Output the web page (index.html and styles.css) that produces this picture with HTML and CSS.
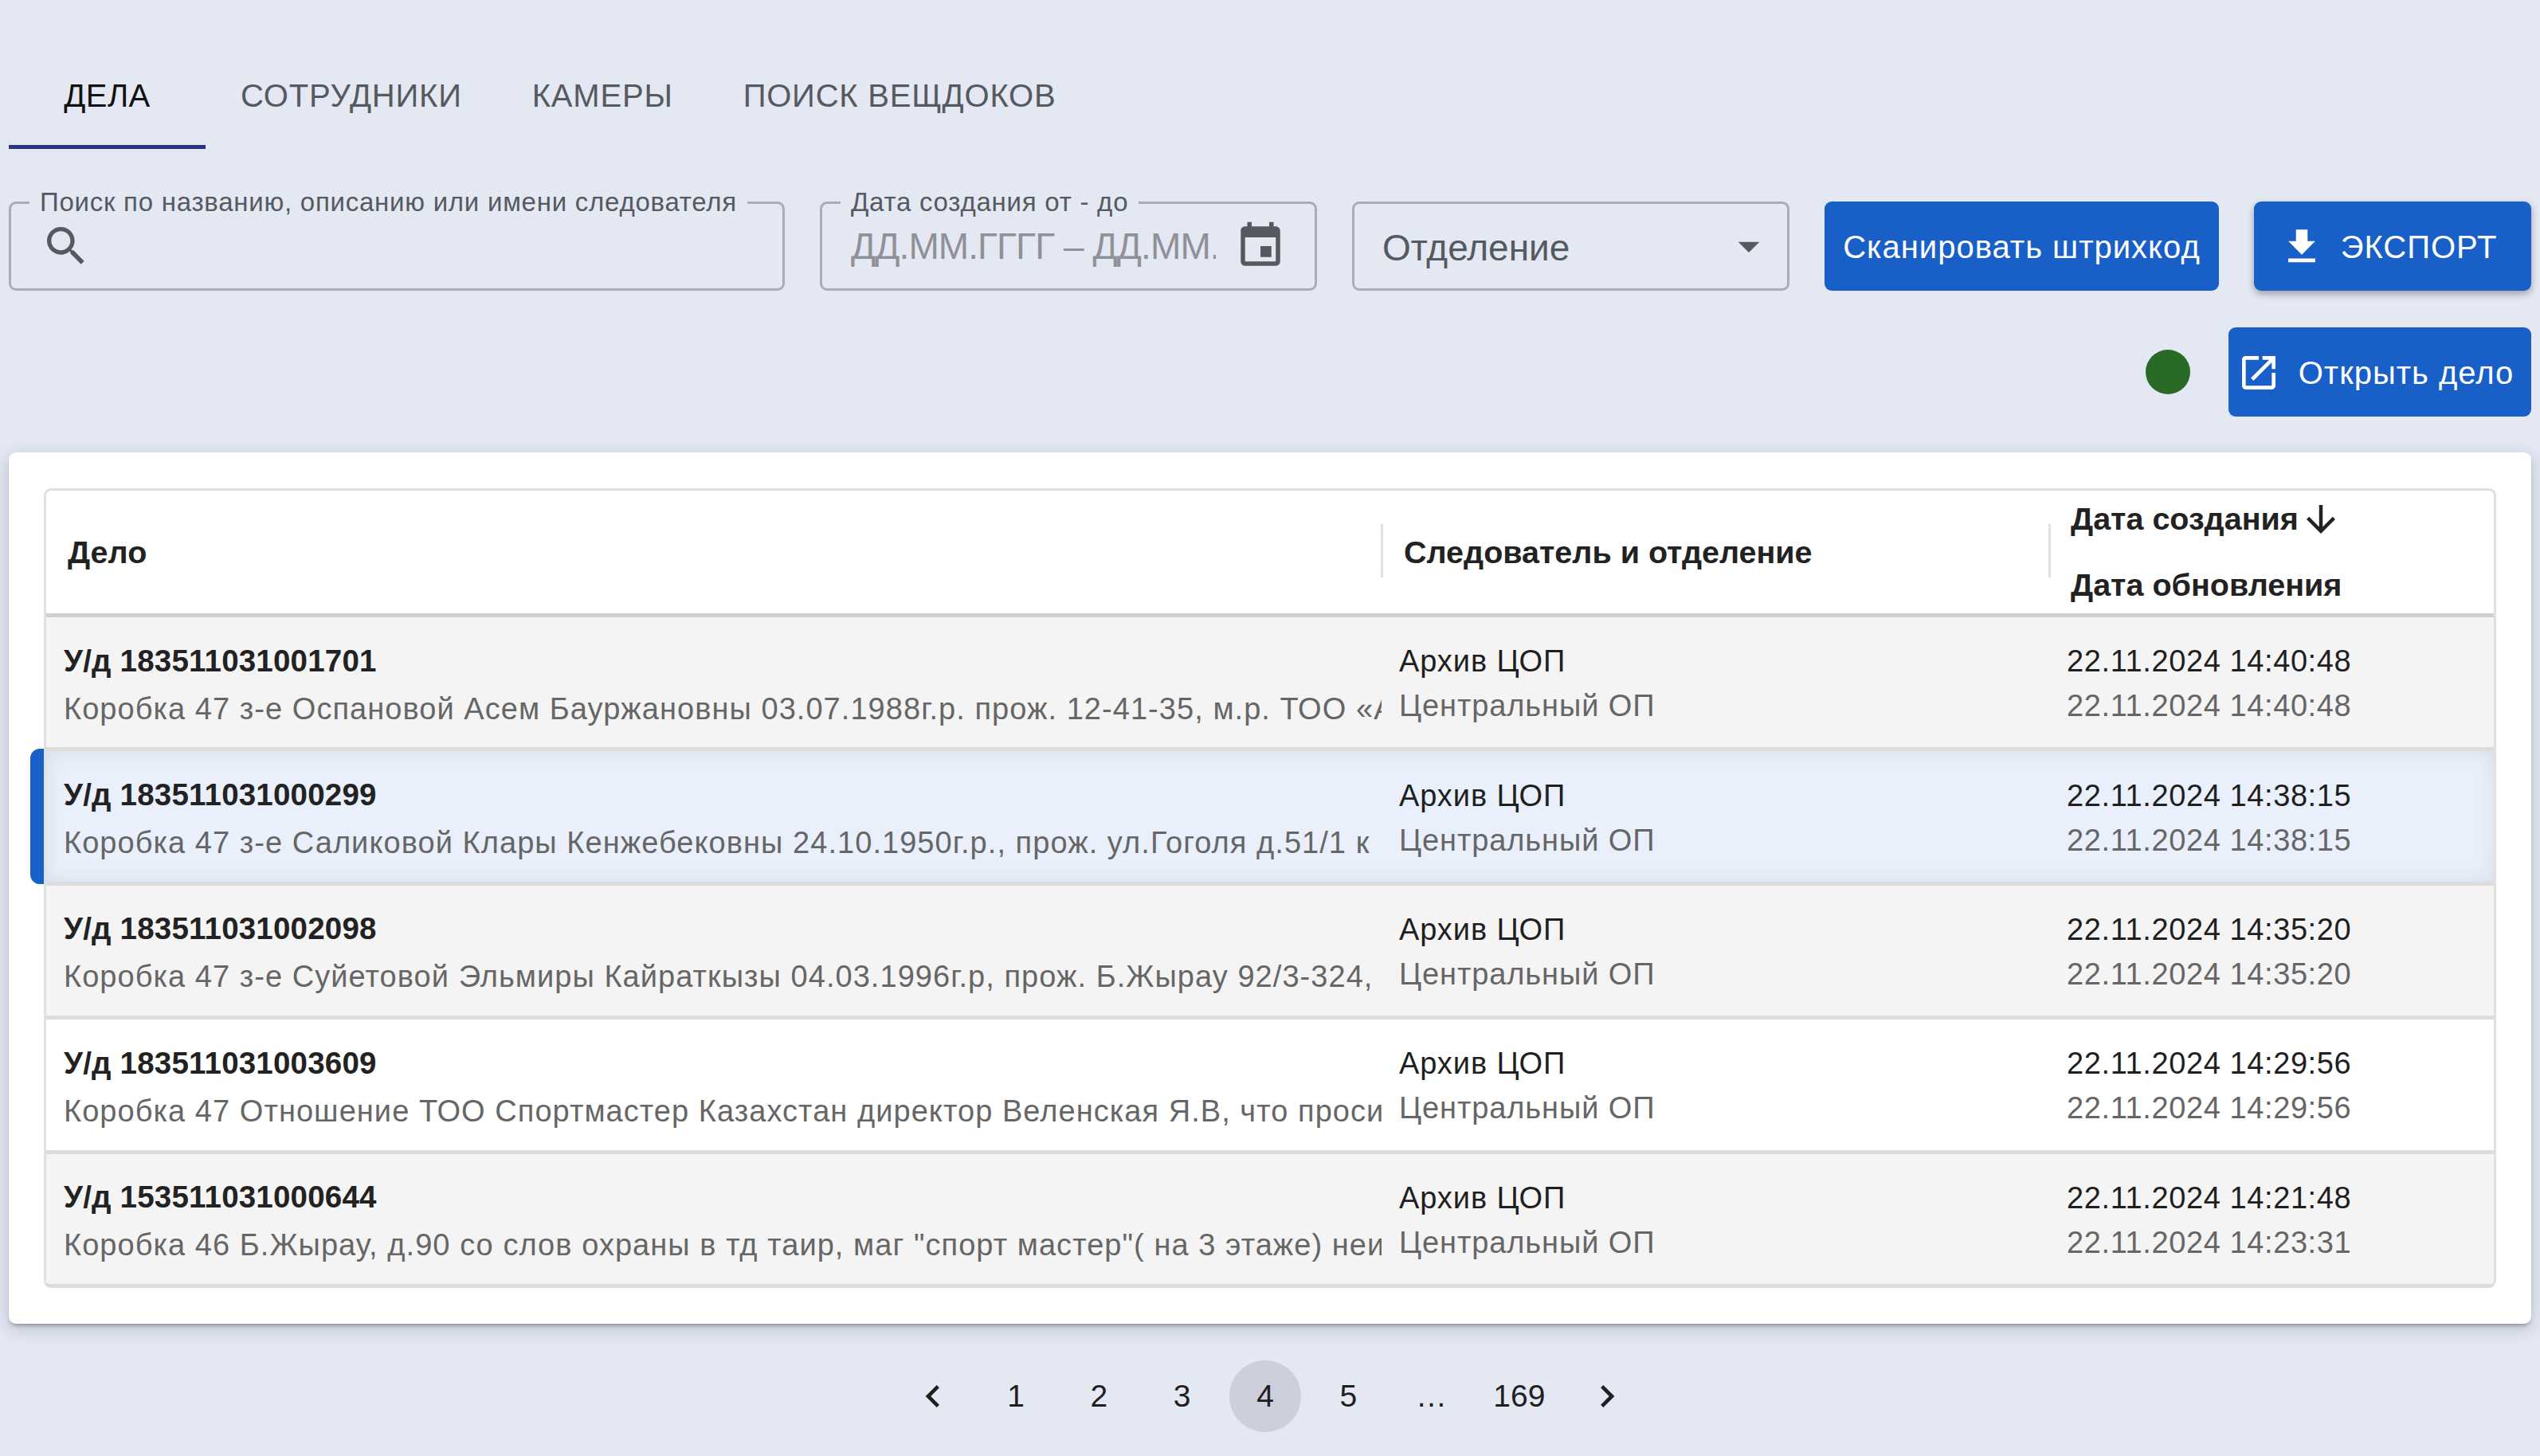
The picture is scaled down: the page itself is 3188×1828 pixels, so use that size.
FILE: index.html
```html
<!DOCTYPE html>
<html lang="ru">
<head>
    <meta charset="UTF-8">
    <title>Дела</title>
    <link rel="stylesheet" href="styles.css">
</head>
<body>
    <!-- Вкладки -->
    <nav class="tabs">
        <a class="tab tab-active">ДЕЛА</a>
        <a class="tab">СОТРУДНИКИ</a>
        <a class="tab">КАМЕРЫ</a>
        <a class="tab">ПОИСК ВЕЩДОКОВ</a>
    </nav>

    <!-- Фильтры -->
    <div class="toolbar">
        <div class="field field-search">
            <span class="field-label">Поиск по названию, описанию или имени следователя</span>
            <svg class="icon icon-search" viewBox="0 0 24 24"><path d="M15.5 14h-.79l-.28-.27C15.41 12.59 16 11.11 16 9.5 16 5.91 13.09 3 9.5 3S3 5.91 3 9.5 5.91 16 9.5 16c1.61 0 3.09-.59 4.23-1.57l.27.28v.79l5 4.99L20.49 19l-4.99-5zm-6 0C7.01 14 5 11.99 5 9.5S7.01 5 9.5 5 14 7.01 14 9.5 11.99 14 9.5 14z"/></svg>
        </div>
        <div class="field field-date">
            <span class="field-label">Дата создания от - до</span>
            <span class="date-placeholder">ДД.ММ.ГГГГ – ДД.ММ.</span>
            <svg class="icon icon-date" viewBox="0 0 24 24"><path d="M17 12h-5v5h5v-5zM16 1v2H8V1H6v2H5c-1.11 0-1.99.9-1.99 2L3 19c0 1.1.89 2 2 2h14c1.1 0 2-.9 2-2V5c0-1.1-.9-2-2-2h-1V1h-2zm3 18H5V8h14v11z"/></svg>
        </div>
        <div class="field field-select">
            <span class="select-text">Отделение</span>
            <svg class="icon icon-caret" viewBox="0 0 24 24"><path d="M7 10l5 5 5-5z"/></svg>
        </div>
        <button class="btn btn-scan">Сканировать штрихкод</button>
        <button class="btn btn-export">
            <svg class="icon icon-download" viewBox="0 0 24 24"><path d="M19 9h-4V3H9v6H5l7 7 7-7zM5 18v2h14v-2H5z"/></svg>
            ЭКСПОРТ
        </button>
    </div>

    <div class="actions">
        <span class="status-dot"></span>
        <button class="btn btn-open">
            <svg class="icon icon-open" viewBox="0 0 24 24"><path d="M19 19H5V5h7V3H5c-1.11 0-2 .9-2 2v14c0 1.1.89 2 2 2h14c1.1 0 2-.9 2-2v-7h-2v7zM14 3v2h3.59l-9.83 9.83 1.41 1.41L19 6.41V10h2V3h-7z"/></svg>
            Открыть дело
        </button>
    </div>

    <!-- Таблица дел -->
    <main class="paper">
        <div class="grid-table">
            <div class="head">
                <div class="head-cell head-case">Дело</div>
                <div class="head-cell head-person">Следователь и отделение</div>
                <div class="head-cell head-dates">
                    <div class="head-line">Дата создания
                        <svg class="icon icon-arrow" viewBox="0 0 24 24"><path d="M20 12l-1.41-1.41L13 16.17V4h-2v12.17l-5.58-5.59L4 12l8 8 8-8z"/></svg>
                    </div>
                    <div class="head-line">Дата обновления</div>
                </div>
            </div>

            <div class="row row-grey">
                <div class="cell cell-case">
                    <div class="case-title">У/д 183511031001701</div>
                    <div class="case-desc">Коробка 47 з-е Оспановой Асем Бауржановны 03.07.1988г.р. прож. 12-41-35, м.р. ТОО «А</div>
                </div>
                <div class="cell cell-person">
                    <div class="main-text">Архив ЦОП</div>
                    <div class="sub-text">Центральный ОП</div>
                </div>
                <div class="cell">
                    <div class="main-text">22.11.2024 14:40:48</div>
                    <div class="sub-text">22.11.2024 14:40:48</div>
                </div>
            </div>

            <div class="row row-selected">
                <div class="cell cell-case">
                    <div class="case-title">У/д 183511031000299</div>
                    <div class="case-desc">Коробка 47 з-е Саликовой Клары Кенжебековны 24.10.1950г.р., прож. ул.Гоголя д.51/1 к</div>
                </div>
                <div class="cell cell-person">
                    <div class="main-text">Архив ЦОП</div>
                    <div class="sub-text">Центральный ОП</div>
                </div>
                <div class="cell">
                    <div class="main-text">22.11.2024 14:38:15</div>
                    <div class="sub-text">22.11.2024 14:38:15</div>
                </div>
            </div>

            <div class="row row-grey">
                <div class="cell cell-case">
                    <div class="case-title">У/д 183511031002098</div>
                    <div class="case-desc">Коробка 47 з-е Суйетовой Эльмиры Кайраткызы 04.03.1996г.р, прож. Б.Жырау 92/3-324,</div>
                </div>
                <div class="cell cell-person">
                    <div class="main-text">Архив ЦОП</div>
                    <div class="sub-text">Центральный ОП</div>
                </div>
                <div class="cell">
                    <div class="main-text">22.11.2024 14:35:20</div>
                    <div class="sub-text">22.11.2024 14:35:20</div>
                </div>
            </div>

            <div class="row">
                <div class="cell cell-case">
                    <div class="case-title">У/д 183511031003609</div>
                    <div class="case-desc">Коробка 47 Отношение ТОО Спортмастер Казахстан директор Веленская Я.В, что проси</div>
                </div>
                <div class="cell cell-person">
                    <div class="main-text">Архив ЦОП</div>
                    <div class="sub-text">Центральный ОП</div>
                </div>
                <div class="cell">
                    <div class="main-text">22.11.2024 14:29:56</div>
                    <div class="sub-text">22.11.2024 14:29:56</div>
                </div>
            </div>

            <div class="row row-grey row-last">
                <div class="cell cell-case">
                    <div class="case-title">У/д 153511031000644</div>
                    <div class="case-desc">Коробка 46 Б.Жырау, д.90 со слов охраны в тд таир, маг "спорт мастер"( на 3 этаже) неи</div>
                </div>
                <div class="cell cell-person">
                    <div class="main-text">Архив ЦОП</div>
                    <div class="sub-text">Центральный ОП</div>
                </div>
                <div class="cell">
                    <div class="main-text">22.11.2024 14:21:48</div>
                    <div class="sub-text">22.11.2024 14:23:31</div>
                </div>
            </div>
        </div>
    </main>

    <!-- Пагинация -->
    <nav class="pagination">
        <span class="page"><svg class="icon icon-chevron" viewBox="0 0 24 24"><path d="M15.41 7.41 14 6l-6 6 6 6 1.41-1.41L10.83 12z"/></svg></span>
        <span class="page">1</span>
        <span class="page">2</span>
        <span class="page">3</span>
        <span class="page page-current">4</span>
        <span class="page">5</span>
        <span class="page">…</span>
        <span class="page page-wide">169</span>
        <span class="page"><svg class="icon icon-chevron" viewBox="0 0 24 24"><path d="M10 6 8.59 7.41 13.17 12l-4.58 4.59L10 18l6-6z"/></svg></span>
    </nav>
</body>
</html>
```

FILE: styles.css
```css
/* Общие стили */
html, body {
    margin: 0;
    height: 100%;
}

body {
    font-family: "Liberation Sans", Arial, sans-serif;
    background-color: #e4e8f3;
    color: #1f1f1f;
    padding: 0 11px;
    box-sizing: border-box;
    min-height: 1828px;
}

.icon {
    display: block;
    fill: currentColor;
    flex: none;
}

/* Вкладки */
.tabs {
    display: flex;
    padding-top: 53px;
    height: 134px;
}

.tab {
    display: flex;
    align-items: center;
    justify-content: center;
    padding: 0 44px;
    font-size: 40px;
    letter-spacing: 0.8px;
    color: #555a60;
    box-sizing: border-box;
}

.tab-active {
    min-width: 247px;
    color: #111;
    border-bottom: 5px solid #2b3481;
    padding-top: 5px;
    letter-spacing: 0.4px;
}

/* Фильтры */
.toolbar {
    display: flex;
    gap: 44px;
    margin-top: 66px;
}

.field {
    position: relative;
    height: 112px;
    box-sizing: border-box;
    border: 3px solid #a9adb5;
    border-radius: 9px;
    display: flex;
    align-items: center;
    color: #555a60;
}

.field-search {
    width: 974px;
}

.field-date {
    width: 624px;
    padding-left: 36px;
}

.field-select {
    width: 549px;
    padding-left: 35px;
    justify-content: space-between;
}

.field-label {
    position: absolute;
    top: -22px;
    left: 23px;
    padding: 0 13px;
    font-size: 33px;
    line-height: 40px;
    letter-spacing: 0.75px;
    background-color: #e4e8f3;
    white-space: nowrap;
}

.icon-search {
    width: 64px;
    height: 64px;
    margin-left: 37px;
}

.date-placeholder {
    width: 458px;
    overflow: hidden;
    white-space: nowrap;
    font-size: 46px;
    letter-spacing: -0.9px;
    color: #8e9197;
}

.icon-date {
    width: 66px;
    height: 66px;
    margin-left: 23px;
}

.select-text {
    font-size: 46px;
    padding-top: 3px;
}

.icon-caret {
    width: 64px;
    height: 64px;
    margin-right: 16px;
}

/* Кнопки */
.btn {
    display: flex;
    align-items: center;
    justify-content: center;
    height: 112px;
    box-sizing: border-box;
    border: none;
    border-radius: 9px;
    background-color: #1860c8;
    color: #fff;
    font-family: inherit;
    font-size: 40px;
    letter-spacing: 1px;
    padding: 2px 0 0;
}

.btn-scan {
    width: 495px;
}

.btn-export {
    width: 348px;
    gap: 20px;
    padding-right: 12px;
    box-shadow: 0 4px 10px rgba(0, 0, 0, 0.32);
}

.icon-download {
    width: 58px;
    height: 58px;
}

.actions {
    display: flex;
    justify-content: flex-end;
    align-items: center;
    gap: 48px;
    margin-top: 46px;
}

.status-dot {
    width: 56px;
    height: 56px;
    border-radius: 50%;
    background-color: #296a27;
}

.btn-open {
    width: 380px;
    gap: 22px;
    padding-right: 12px;
}

.icon-open {
    width: 56px;
    height: 56px;
}

/* Таблица */
.paper {
    margin-top: 45px;
    height: 1094px;
    box-sizing: border-box;
    padding: 45px 44px 45px 44px;
    background-color: #fff;
    border-radius: 9px;
    box-shadow: 0 4px 5px -2px rgba(0, 0, 0, 0.3), 0 6px 22px rgba(20, 30, 70, 0.2);
}

.grid-table {
    border: 3px solid #e0e0e0;
    border-bottom: 5px solid #dcdcdc;
    border-radius: 9px;
    height: 1004px;
    box-sizing: border-box;
}

.head,
.row {
    display: grid;
    grid-template-columns: 1678px 838px 1fr;
    box-sizing: border-box;
}

.head {
    height: 159px;
    grid-template-rows: minmax(0, 1fr);
    border-bottom: 5px solid #d0d0d0;
    align-items: center;
    font-weight: bold;
    font-size: 39.5px;
    color: #222;
}

.head-cell {
    position: relative;
    padding-left: 27px;
}

.head-person::before,
.head-dates::before {
    content: "";
    position: absolute;
    left: -3px;
    top: 50%;
    width: 3px;
    height: 67px;
    margin-top: -35px;
    background-color: #e0e0e0;
}

.head-person {
    padding-left: 26px;
}

.head-dates {
    padding-left: 25px;
}

.head-line {
    display: flex;
    align-items: center;
    gap: 9px;
    height: 83px;
    white-space: nowrap;
}

.icon-arrow {
    width: 54px;
    height: 54px;
    margin-left: -8px;
}

.row {
    position: relative;
    height: 168.4px;
    border-bottom: 5px solid #dcdcdc;
    background-color: #fff;
}

.row-last {
    height: 163.4px;
    border-bottom: none;
    border-radius: 0 0 7px 7px;
}

.row-grey {
    background-color: #f4f4f4;
}

.row-selected {
    background-color: #e9f0fb;
    box-shadow: inset 0 0 26px rgba(30, 40, 80, 0.09);
}

/* Синяя метка выбранной строки */
.row-selected::before {
    content: "";
    position: absolute;
    left: -20px;
    top: -3px;
    bottom: -3px;
    width: 17px;
    background-color: #1860c8;
    border-radius: 12px 0 0 12px;
}

.cell {
    display: flex;
    flex-direction: column;
    justify-content: center;
    padding-left: 20px;
    padding-top: 3px;
    min-width: 0;
    font-size: 38px;
    line-height: 56px;
    letter-spacing: 0.6px;
}

.cell-person {
    letter-spacing: 0.9px;
}

.cell-case {
    padding-left: 22px;
    padding-top: 6px;
    line-height: 60px;
    overflow: hidden;
    white-space: nowrap;
}

.case-title {
    font-weight: bold;
    font-size: 38.5px;
    color: #222;
    letter-spacing: 0.2px;
}

.case-desc {
    letter-spacing: 1.05px;
    margin-right: 2px;
    overflow: hidden;
}

.case-desc,
.sub-text {
    color: #666;
}

/* Пагинация */
.pagination {
    display: flex;
    justify-content: center;
    margin-top: 46px;
    gap: 14.3px;
    font-size: 39px;
    color: #1f1f1f;
}

.page {
    display: flex;
    align-items: center;
    justify-content: center;
    width: 90px;
    height: 90px;
    border-radius: 50%;
}

.page-wide {
    width: 102px;
}

.page-current {
    background-color: #cdd0dc;
}

.icon-chevron {
    width: 56px;
    height: 56px;
}
```
